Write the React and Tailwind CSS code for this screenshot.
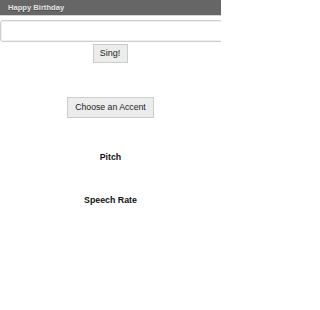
export default function App() {
  return (
    <div className="w-[221px] h-[310px] bg-white overflow-hidden" style={{ fontFamily: '"Liberation Sans", Arial, sans-serif' }}>
      <div className="h-[15px] bg-[#666666] border-b border-[#d4d4d4] flex items-center pl-[8px] box-content">
        <span className="text-[7.6px] font-bold text-[#e6e6e6] leading-none [text-shadow:0_1px_0_#4a4a4a]">Happy Birthday</span>
      </div>
      <div className="mt-[4px] w-[230px] h-[22px] border border-[#cfcfcf] rounded-[3px] bg-white shadow-[inset_0_0_0_1px_#f0f0f0]"></div>
      <div className="flex justify-center mt-[2px]">
        <button className="ml-[-1px] w-[35px] h-[19px] bg-[#ececec] border border-[#cccccc] text-[#222] text-[9px] leading-none flex items-center justify-center">Sing!</button>
      </div>
      <div className="flex justify-center mt-[34px]">
        <button className="w-[87px] h-[21px] bg-[#ececec] border border-[#cccccc] text-[#222] text-[8.7px] leading-none flex items-center justify-center">Choose an Accent</button>
      </div>
      <div className="mt-[34px] text-center text-[8.8px] font-bold text-[#111] leading-[10px]">Pitch</div>
      <div className="mt-[33px] text-center text-[8.8px] font-bold text-[#111] leading-[10px]">Speech Rate</div>
    </div>
  );
}
